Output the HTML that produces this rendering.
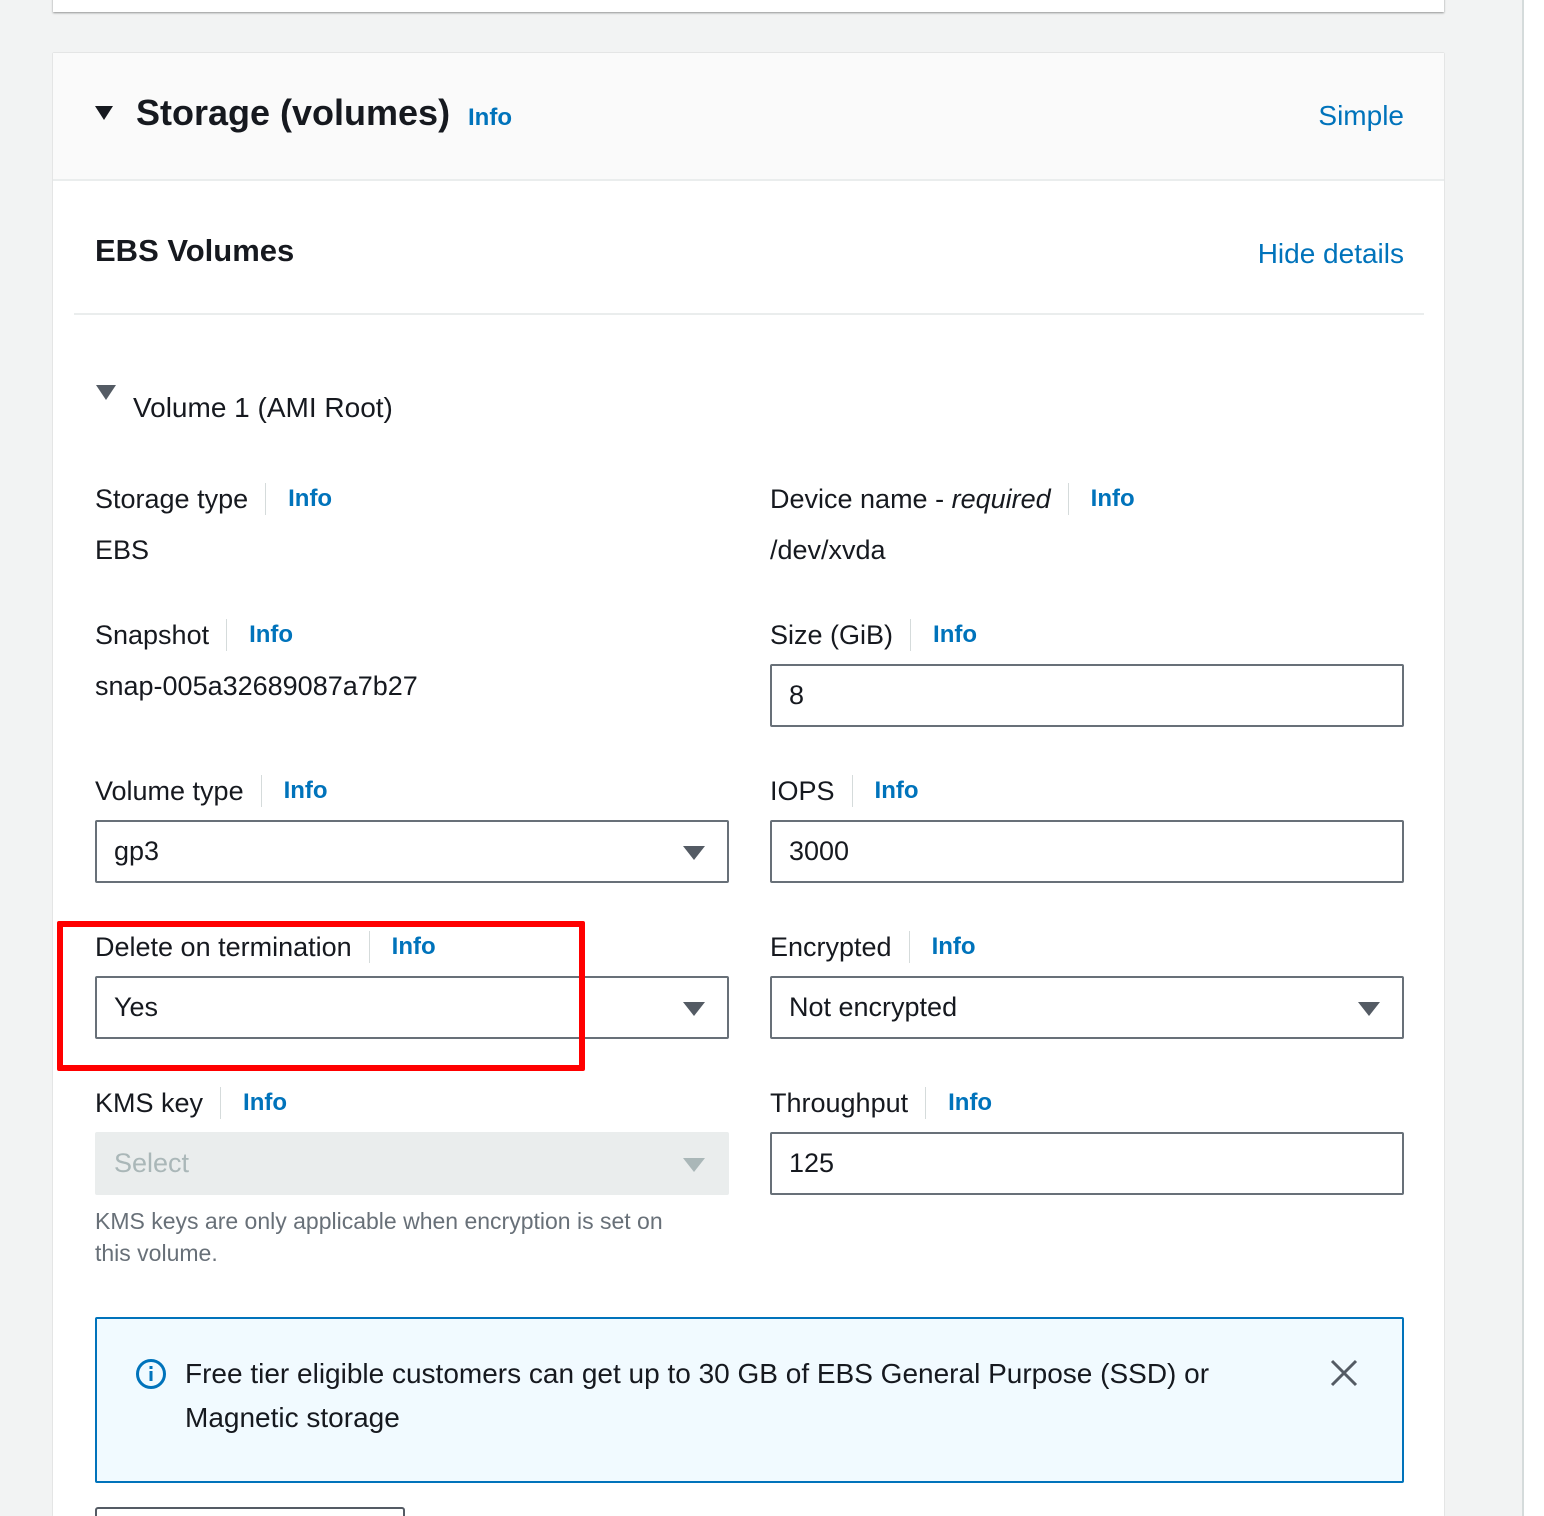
<!DOCTYPE html>
<html style="overflow:hidden"><head><meta charset="utf-8"><style>
*{box-sizing:border-box;margin:0;padding:0}
html,body{width:1544px;height:1516px;overflow:hidden}
body{background:#f2f3f3;font-family:"Liberation Sans",sans-serif;color:#16191f;position:relative}
.a{position:absolute}
.top{left:53px;top:-10px;width:1391px;height:22px;background:#fff;box-shadow:0 1px 2px rgba(0,0,0,.4)}
.panel{left:53px;top:53px;width:1391px;height:1463px;background:#fff;box-shadow:0 0 1px rgba(0,0,0,.3)}
.hdr{left:53px;top:53px;width:1391px;height:128px;background:#fafafa;border-bottom:2px solid #eaeded}
.blue{color:#0073bb}
.lab{display:flex;align-items:center;font-size:27px;height:34px;white-space:nowrap}
.lab .sep{width:1px;height:32px;background:#d5dbdb;margin:0 22px 0 17px}
.lab .info{color:#0073bb;font-weight:bold;font-size:24px}
.val{font-size:27px}
.inp{height:63px;border:2px solid #687078;border-radius:2px;background:#fff;font-size:27px;padding-left:17px;line-height:59px}
.arr{position:absolute;right:22px;top:24px;width:0;height:0;border-left:11px solid transparent;border-right:11px solid transparent;border-top:14px solid #545b64}
</style></head><body>
<div class="a top"></div>
<div class="a panel"></div>
<div class="a hdr"></div>
<div class="a" style="left:1522px;top:0;width:2px;height:1516px;background:#d5dbdb"></div>
<div class="a" style="left:1524px;top:0;width:20px;height:1516px;background:#fff"></div>

<div class="a" style="left:95px;top:106px;width:0;height:0;border-left:9px solid transparent;border-right:9px solid transparent;border-top:14px solid #16191f"></div>
<div class="a" style="left:136px;top:92px;font-size:36px;font-weight:bold">Storage (volumes)</div>
<div class="a blue" style="left:468px;top:104px;font-size:24px;font-weight:bold">Info</div>
<div class="a blue" style="right:140px;top:100px;font-size:28px">Simple</div>

<div class="a" style="left:95px;top:233px;font-size:31px;font-weight:bold">EBS Volumes</div>
<div class="a blue" style="right:140px;top:238px;font-size:28px">Hide details</div>
<div class="a" style="left:74px;top:313px;width:1350px;height:2px;background:#eaeded"></div>

<div class="a" style="left:96px;top:385px;width:0;height:0;border-left:10px solid transparent;border-right:10px solid transparent;border-top:15px solid #545b64"></div>
<div class="a" style="left:133px;top:392px;font-size:28px">Volume 1 (AMI Root)</div>

<div class="a lab" style="left:95px;top:482px">Storage type<span class="sep"></span><span class="info">Info</span></div>
<div class="a val" style="left:95px;top:535px">EBS</div>
<div class="a lab" style="left:770px;top:482px">Device name - <i>&nbsp;required</i><span class="sep"></span><span class="info">Info</span></div>
<div class="a val" style="left:770px;top:535px">/dev/xvda</div>

<div class="a lab" style="left:95px;top:618px">Snapshot<span class="sep"></span><span class="info">Info</span></div>
<div class="a val" style="left:95px;top:671px">snap-005a32689087a7b27</div>
<div class="a lab" style="left:770px;top:618px">Size (GiB)<span class="sep"></span><span class="info">Info</span></div>
<div class="a inp" style="left:770px;top:664px;width:634px">8</div>

<div class="a lab" style="left:95px;top:774px">Volume type<span class="sep"></span><span class="info">Info</span></div>
<div class="a inp" style="left:95px;top:820px;width:634px">gp3<span class="arr"></span></div>
<div class="a lab" style="left:770px;top:774px">IOPS<span class="sep"></span><span class="info">Info</span></div>
<div class="a inp" style="left:770px;top:820px;width:634px">3000</div>

<div class="a lab" style="left:95px;top:930px">Delete on termination<span class="sep"></span><span class="info">Info</span></div>
<div class="a inp" style="left:95px;top:976px;width:634px">Yes<span class="arr"></span></div>
<div class="a lab" style="left:770px;top:930px">Encrypted<span class="sep"></span><span class="info">Info</span></div>
<div class="a inp" style="left:770px;top:976px;width:634px">Not encrypted<span class="arr"></span></div>
<div class="a" style="left:57px;top:921px;width:528px;height:150px;border:6px solid #f00;border-radius:2px"></div>

<div class="a lab" style="left:95px;top:1086px">KMS key<span class="sep"></span><span class="info">Info</span></div>
<div class="a inp" style="left:95px;top:1132px;width:634px;background:#eaeded;border-color:#eaeded;color:#aab7b8">Select<span class="arr" style="border-top-color:#aab7b8"></span></div>
<div class="a" style="left:95px;top:1205px;font-size:23px;line-height:32px;color:#687078;width:605px">KMS keys are only applicable when encryption is set on this volume.</div>
<div class="a lab" style="left:770px;top:1086px">Throughput<span class="sep"></span><span class="info">Info</span></div>
<div class="a inp" style="left:770px;top:1132px;width:634px">125</div>

<div class="a" style="left:95px;top:1317px;width:1309px;height:166px;background:#f1faff;border:2px solid #0073bb;border-radius:2px"></div>
<svg class="a" style="left:135px;top:1358px" width="32" height="32" viewBox="0 0 32 32"><circle cx="16" cy="16" r="13.5" fill="none" stroke="#0073bb" stroke-width="3"/><rect x="14.5" y="13" width="3" height="10" fill="#0073bb"/><rect x="14.5" y="8" width="3" height="3" fill="#0073bb"/></svg>
<div class="a" style="left:185px;top:1352px;font-size:28px;line-height:44px;width:1080px">Free tier eligible customers can get up to 30 GB of EBS General Purpose (SSD) or Magnetic storage</div>
<svg class="a" style="left:1330px;top:1359px" width="28" height="28" viewBox="0 0 28 28"><path d="M2 2L26 26M26 2L2 26" stroke="#545b64" stroke-width="3"/></svg>

<div class="a" style="left:95px;top:1507px;width:310px;height:30px;border:2px solid #545b64;border-radius:3px;background:#fff"></div>
</body></html>
